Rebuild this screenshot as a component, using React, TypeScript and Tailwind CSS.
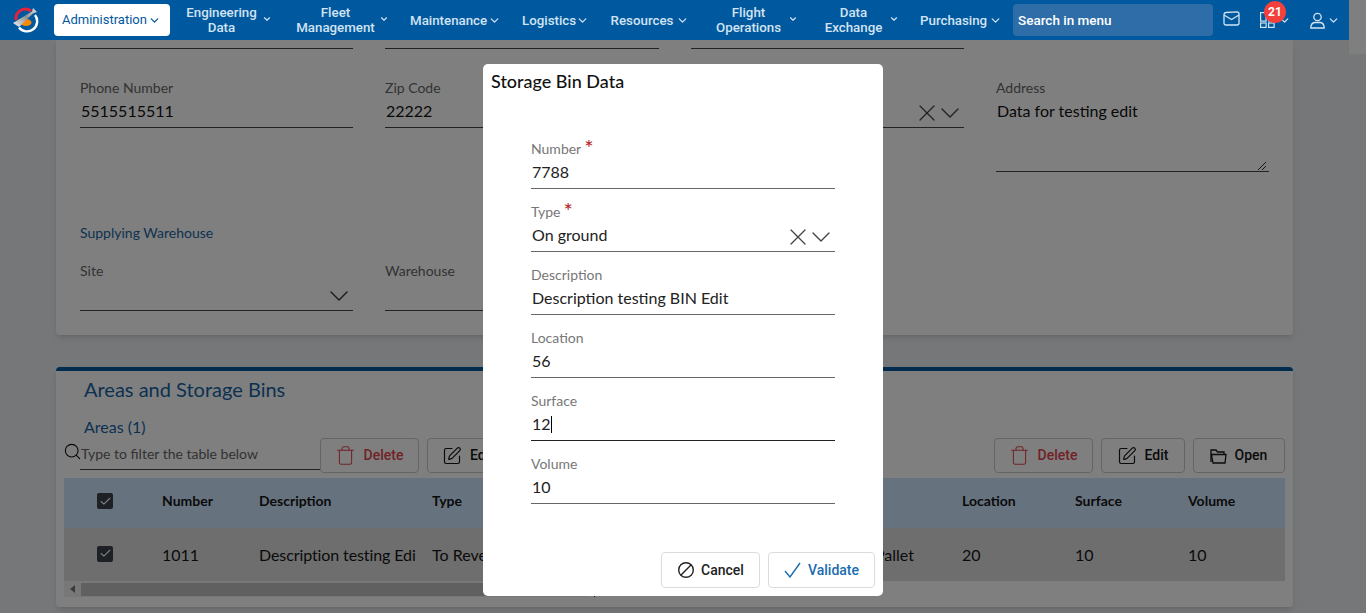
import React from "react";
import { ChevronDown, X, Search, Trash, SquarePen, Check } from "lucide-react";

function Logo() {
  return (
    <svg width="28" height="28" viewBox="0 0 28 28" className="shrink-0">
      <defs>
        <linearGradient id="band" x1="0" y1="1" x2="1" y2="0">
          <stop offset="0" stopColor="#f4f4f4" />
          <stop offset="0.55" stopColor="#8d8d8d" />
          <stop offset="1" stopColor="#e8e8e8" />
        </linearGradient>
      </defs>
      <path d="M5 15 A9.5 9.5 0 0 1 20 6" fill="none" stroke="#e8213a" strokeWidth="3" />
      <path d="M24 10 A10 10 0 0 1 8 22.500" fill="none" stroke="#ffffff" strokeWidth="2.400" />
      <ellipse cx="15" cy="17.500" rx="5.500" ry="3.600" fill="#f58a07" />
      <path d="M2 18 L21 6.500 L22 3 L26 7 L22 8.500 L8 22 Z" fill="url(#band)" />
    </svg>
  );
}

function NavChevron() {
  return (
    <span className="w-4 flex justify-center shrink-0">
      <ChevronDown size={13} strokeWidth={2.4} />
    </span>
  );
}

function NavItem({
  lines,
  className,
  textW,
}: {
  lines: string[];
  className: string;
  textW: string;
}) {
  const two = lines.length > 1;
  return (
    <div className={"flex items-center shrink-0 " + className}>
      <div className={"text-center text-[13.3px] leading-[15px] font-medium whitespace-nowrap " + textW}>
        {lines.map((l) => (
          <div key={l}>{l}</div>
        ))}
      </div>
      {two ? (
        <span className="w-3 flex justify-center shrink-0 -mt-[3px]">
          <ChevronDown size={10} strokeWidth={2.8} />
        </span>
      ) : (
        <NavChevron />
      )}
    </div>
  );
}

function MailIcon() {
  return (
    <svg width="17" height="15" viewBox="0 0 17 15" fill="none" stroke="currentColor" strokeWidth="1.300" className="shrink-0 -mt-[3px]">
      <path d="M1 3.500 Q1 1.700 3 1.500 L14 0.800 Q16 0.800 16 2.800 V12 Q16 14 14 14 H3 Q1 14 1 12 Z" />
      <path d="M1 4 L8.500 8.500 L16 4" />
    </svg>
  );
}

function GridIcon() {
  return (
    <svg width="15" height="16" viewBox="0 0 15 16" fill="none" stroke="currentColor" strokeWidth="1.200" className="shrink-0">
      <rect x="0.600" y="0.600" width="5.500" height="8.500" />
      <rect x="0.600" y="11" width="5.500" height="4.400" />
      <rect x="8.600" y="11" width="5.500" height="4.400" />
      <rect x="8.600" y="4.500" width="5.500" height="4.500" />
    </svg>
  );
}

function UserIcon() {
  return (
    <svg width="15" height="17" viewBox="0 0 15 17" fill="none" stroke="currentColor" strokeWidth="1.300" className="shrink-0">
      <circle cx="7.500" cy="5" r="3.700" />
      <path d="M0.800 16 Q0.800 11 4.800 10.500 H10.200 Q14.200 11 14.200 16 Z" />
    </svg>
  );
}

function FolderIcon() {
  return (
    <svg width="17" height="16" viewBox="0 0 17 16" fill="none" stroke="currentColor" strokeWidth="1.300" className="shrink-0">
      <path d="M1 14 V2 H6 L7.500 4 H14 V6.500" />
      <path d="M3 15 L1.500 6.500 H16 L15 15 Z" />
    </svg>
  );
}

function Nav() {
  return (
    <header className="relative z-20 h-10 w-[1349px] bg-[#00589f] flex items-center text-[#d2e3f2] font-['Roboto',sans-serif] shrink-0">
      <div className="w-[54px] shrink-0 flex pl-[11px] -mt-[2px]">
        <Logo />
      </div>
      <div className="h-8 w-[116px] shrink-0 bg-white rounded-[4px] flex items-center pl-2 text-[#00589f] text-[13px]">
        <span className="w-[84px] whitespace-nowrap">Administration</span>
        <NavChevron />
      </div>
      <NavItem lines={["Engineering", "Data"]} textW="w-[71px]" className="ml-4 gap-1" />
      <NavItem lines={["Fleet", "Management"]} textW="w-[79px]" className="ml-[23px] gap-[3px]" />
      <NavItem lines={["Maintenance"]} textW="w-[76px]" className="ml-5" />
      <NavItem lines={["Logistics"]} textW="w-[51px]" className="ml-5 gap-[1px]" />
      <NavItem lines={["Resources"]} textW="w-[64px]" className="ml-5" />
      <NavItem lines={["Flight", "Operations"]} textW="w-[65px]" className="ml-[26px] gap-[6px]" />
      <NavItem lines={["Data", "Exchange"]} textW="w-[59px]" className="ml-[25px] gap-[5px]" />
      <NavItem lines={["Purchasing"]} textW="w-[66px]" className="ml-5 gap-[1px]" />
      <div className="ml-[10px] h-8 w-[200px] shrink-0 bg-[#2e6da8] rounded-[4px] flex items-center pl-[5px] text-white text-[13.5px] font-medium">
        Search in menu
      </div>
      <div className="ml-[10px] flex items-center shrink-0">
        <MailIcon />
      </div>
      <div className="ml-5 relative flex items-center gap-[1px] shrink-0">
        <GridIcon />
        <NavChevron />
        <span className="absolute -top-[11px] left-[4px] w-[22px] h-[22px] rounded-full bg-[#f4403c] text-white text-[12px] font-bold flex items-center justify-center">
          21
        </span>
      </div>
      <div className="ml-[18px] flex items-center shrink-0">
        <UserIcon />
        <NavChevron />
      </div>
    </header>
  );
}

function PageField({
  label,
  value,
  children,
}: {
  label?: string;
  value?: string;
  children?: React.ReactNode;
}) {
  return (
    <div className="h-[50px] border-b border-[#444] flex flex-col">
      <div className="h-[20px] text-[14px] leading-[20px] text-[#666]">{label}</div>
      <div className="h-[29px] pb-[4px] flex items-center justify-between text-[16px] text-[#111] pl-[1px]">
        <span>{value}</span>
        {children}
      </div>
    </div>
  );
}

function ClearChevron() {
  return (
    <span className="flex items-center text-[#444] -mr-[2px] -mb-[4px]">
      <X size={28} strokeWidth={1.1} />
      <ChevronDown size={32} strokeWidth={1} className="-ml-[7px]" />
    </span>
  );
}

function Btn({
  w,
  red,
  icon,
  label,
}: {
  w: string;
  red?: boolean;
  icon: React.ReactNode;
  label: string;
}) {
  return (
    <div
      className={
        "h-[35px] shrink-0 border border-[#c9c9c9] rounded-[4px] flex items-center justify-center gap-[9px] font-['Roboto',sans-serif] font-medium text-[14px] " +
        w +
        (red ? " text-[#e0454f]" : " text-[#151515]")
      }
    >
      {icon}
      <span className="-translate-x-[1px]">{label}</span>
    </div>
  );
}

function Box() {
  return (
    <span className="w-4 h-4 rounded-[2px] bg-[#3a424c] flex items-center justify-center">
      <Check size={13} strokeWidth={2} className="text-white" />
    </span>
  );
}

function Page() {
  return (
    <main className="h-[573px] overflow-hidden pl-14 w-[1349px]">
      <section className="h-[295px] w-[1237px] bg-white rounded-b-[4px] shadow-md px-6">
        <div className="grid grid-cols-[273px_274px_273px] gap-x-[32px] h-[9px]">
          <div className="border-b border-[#444]" />
          <div className="border-b border-[#444]" />
          <div className="border-b border-[#444]" />
        </div>
        <div className="grid grid-cols-[273px_274px_273px_273px] gap-x-[32px] mt-[29px]">
          <PageField label="Phone Number" value="5515515511" />
          <PageField label="Zip Code" value="22222" />
          <PageField>
            <ClearChevron />
          </PageField>
          <div className="h-[94px] border-b border-[#444] relative">
            <div className="h-[20px] text-[14px] leading-[20px] text-[#666]">Address</div>
            <div className="h-[29px] pb-[4px] flex items-center text-[16px] text-[#111] pl-[1px]">Data for testing edit</div>
            <svg width="10" height="10" viewBox="0 0 10 10" className="absolute right-[2px] bottom-[0px] text-[#333]" stroke="currentColor">
              <path d="M1 9 L9 1 M5 9 L9 5" />
            </svg>
          </div>
        </div>
        <div className="mt-[51px] h-[20px] text-[14px] leading-[20px] text-[#1d64a0]">Supplying Warehouse</div>
        <div className="grid grid-cols-[273px_274px] gap-x-[32px] mt-[18px]">
          <PageField label="Site">
            <ChevronDown size={32} strokeWidth={1} className="text-[#333] -mr-[2px] -mb-[5px]" />
          </PageField>
          <PageField label="Warehouse" />
        </div>
      </section>

      <section className="mt-8 h-[240px] w-[1237px] bg-white rounded-[4px] shadow-md border-t-4 border-[#005a9e] px-2">
        <div className="pl-5 mt-[4px] text-[20px] leading-[28px] text-[#1763a3]">Areas and Storage Bins</div>
        <div className="pl-5 mt-[12px] text-[16px] leading-[23px] h-[23px] text-[#1763a3]">Areas (1)</div>
        <div className="flex h-[35px] items-start">
          <Search size={19} strokeWidth={1.4} className="mt-[4px] shrink-0 text-[#111] -ml-[1px]" />
          <div className="w-[240px] -ml-[2px] h-[32px] border-b border-[#444] flex items-center text-[14px] text-[#666] pl-[1px] shrink-0">
            Type to filter the table below
          </div>
          <div className="flex gap-2">
            <Btn w="w-[99px]" red icon={<Trash size={21} strokeWidth={1.2} />} label="Delete" />
            <Btn w="w-[83px]" icon={<SquarePen size={20} strokeWidth={1.4} />} label="Edit" />
          </div>
          <div className="flex gap-2 ml-auto">
            <Btn w="w-[99px]" red icon={<Trash size={21} strokeWidth={1.2} />} label="Delete" />
            <Btn w="w-[84px]" icon={<SquarePen size={20} strokeWidth={1.4} />} label="Edit" />
            <Btn w="w-[92px]" icon={<FolderIcon />} label="Open" />
          </div>
        </div>
        <div className="mt-[5px] h-[50px] bg-[#cfe5ff] flex items-center text-[14px] font-bold text-[#151515] pb-[6px]">
          <div className="w-[98px] pl-[33px] mt-[2px]"><Box /></div>
          <div className="w-[97px]">Number</div>
          <div className="w-[173px]">Description</div>
          <div className="w-[530px]">Type</div>
          <div className="w-[113px]">Location</div>
          <div className="w-[113px]">Surface</div>
          <div>Volume</div>
        </div>
        <div className="h-[53px] bg-[#dcdcdc] flex items-center text-[16px] text-[#151515]">
          <div className="w-[98px] pl-[33px] -mt-[2px]"><Box /></div>
          <div className="w-[97px]">1011</div>
          <div className="w-[173px] whitespace-nowrap tracking-[-0.1px]">Description testing Edi</div>
          <div className="w-[443px]">To Reverse</div>
          <div className="w-[87px]">Pallet</div>
          <div className="w-[113px]">20</div>
          <div className="w-[113px]">10</div>
          <div>10</div>
        </div>
        <div className="h-4 w-[531px] border-r border-[#222]">
          <div className="h-4 w-[524px] bg-[#f1f1f1] flex items-center">
            <div className="w-[17px] flex justify-center">
              <span className="w-0 h-0 border-y-[4px] border-y-transparent border-r-[5px] border-r-[#777]" />
            </div>
            <div className="h-[13px] w-[471px] bg-[#c1c1c1]" />
          </div>
        </div>
      </section>
    </main>
  );
}

function Field({
  label,
  value,
  req,
  focus,
  children,
}: {
  label: string;
  value: string;
  req?: boolean;
  focus?: boolean;
  children?: React.ReactNode;
}) {
  return (
    <div className={"h-[63px] flex flex-col justify-end border-b " + (focus ? "border-[#222]" : "border-[#666]")}>
      <div className="h-[20px] flex items-start text-[14px] leading-[22px] text-[#777]">
        {label}
        {req && <span className="ml-[3px] text-[22px] leading-[20px] text-[#b71c1c]">*</span>}
      </div>
      <div className="h-[30px] pb-[2px] flex items-center justify-between text-[16px] text-[#222] pl-[1px]">
        <span className="flex items-center">
          {value}
          {focus && <span className="w-[1px] h-[17px] bg-black" />}
        </span>
        {children}
      </div>
    </div>
  );
}

function Dialog() {
  return (
    <div className="absolute inset-0 z-10 bg-black/50 flex justify-center items-start">
      <div className="mt-16 w-[400px] h-[532px] bg-white rounded-[5px] flex flex-col">
        <h2 className="pl-2 mt-[5px] h-[24px] text-[18px] leading-[24px] font-medium text-[#111]">Storage Bin Data</h2>
        <div className="pl-12 pr-12 mt-[33px]">
          <Field label="Number" value="7788" req />
          <Field label="Type" value="On ground" req>
            <ClearChevron />
          </Field>
          <Field label="Description" value="Description testing BIN Edit" />
          <Field label="Location" value="56" />
          <Field label="Surface" value="12" focus />
          <Field label="Volume" value="10" />
        </div>
        <div className="mt-auto mb-2 pr-2 flex justify-end gap-2 font-['Roboto',sans-serif] text-[14px] font-medium">
          <div className="h-9 w-[99px] border border-[#dcdcdc] rounded-[4px] flex items-center gap-[6px] pl-[15px] text-[#222]">
            <svg width="18" height="18" viewBox="0 0 18 18" fill="none" stroke="currentColor" strokeWidth="1.400" className="shrink-0">
              <circle cx="9" cy="9" r="7.300" />
              <path d="M3.800 14.200 L14.200 3.800" />
            </svg>
            <span>Cancel</span>
          </div>
          <div className="h-9 w-[107px] border border-[#dcdcdc] rounded-[4px] flex items-center gap-[7px] pl-[15px] text-[#1a6cb0]">
            <svg width="17" height="16" viewBox="0 0 17 16" fill="none" stroke="currentColor" strokeWidth="1.400" className="shrink-0">
              <path d="M1 9 L6 15 L16 1" />
            </svg>
            <span>Validate</span>
          </div>
        </div>
      </div>
    </div>
  );
}

export default function App() {
  return (
    <div className="relative h-[613px] w-[1366px] overflow-hidden bg-[#eceef2] font-['Lato',sans-serif] flex">
      <div className="w-[1349px] flex flex-col shrink-0">
        <Nav />
        <Page />
      </div>
      <div className="w-[17px] h-[54px] bg-white shrink-0" />
      <Dialog />
    </div>
  );
}
